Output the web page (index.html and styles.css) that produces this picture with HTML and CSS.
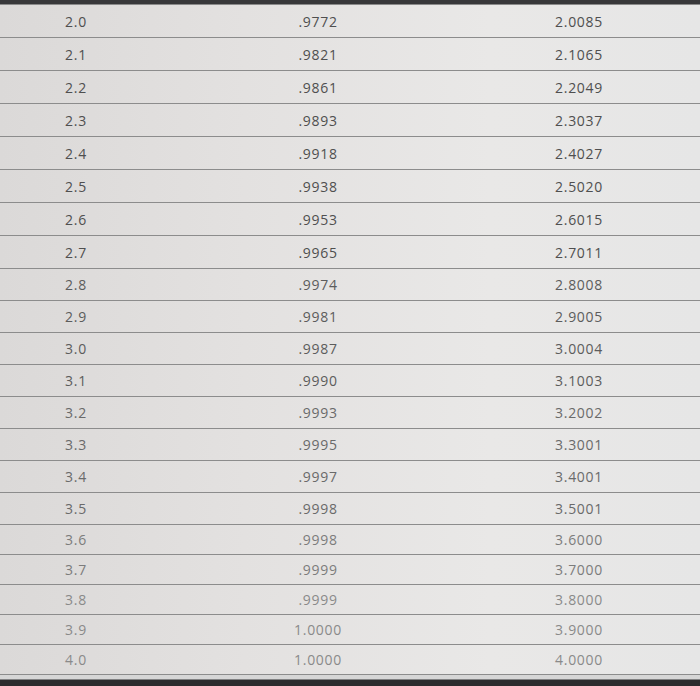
FILE: index.html
```html
<!DOCTYPE html>
<html>
<head>
<meta charset="utf-8">
<link rel="stylesheet" href="styles.css">
</head>
<body>
<div class="screen">
  <div class="bar top"></div>
  <div class="table">
    <div class="row"><span>2.0</span><span>.9772</span><span>2.0085</span></div>
    <div class="row"><span>2.1</span><span>.9821</span><span>2.1065</span></div>
    <div class="row"><span>2.2</span><span>.9861</span><span>2.2049</span></div>
    <div class="row"><span>2.3</span><span>.9893</span><span>2.3037</span></div>
    <div class="row"><span>2.4</span><span>.9918</span><span>2.4027</span></div>
    <div class="row"><span>2.5</span><span>.9938</span><span>2.5020</span></div>
    <div class="row"><span>2.6</span><span>.9953</span><span>2.6015</span></div>
    <div class="row"><span>2.7</span><span>.9965</span><span>2.7011</span></div>
    <div class="row"><span>2.8</span><span>.9974</span><span>2.8008</span></div>
    <div class="row"><span>2.9</span><span>.9981</span><span>2.9005</span></div>
    <div class="row"><span>3.0</span><span>.9987</span><span>3.0004</span></div>
    <div class="row"><span>3.1</span><span>.9990</span><span>3.1003</span></div>
    <div class="row"><span>3.2</span><span>.9993</span><span>3.2002</span></div>
    <div class="row"><span>3.3</span><span>.9995</span><span>3.3001</span></div>
    <div class="row"><span>3.4</span><span>.9997</span><span>3.4001</span></div>
    <div class="row"><span>3.5</span><span>.9998</span><span>3.5001</span></div>
    <div class="row"><span>3.6</span><span>.9998</span><span>3.6000</span></div>
    <div class="row"><span>3.7</span><span>.9999</span><span>3.7000</span></div>
    <div class="row"><span>3.8</span><span>.9999</span><span>3.8000</span></div>
    <div class="row"><span>3.9</span><span>1.0000</span><span>3.9000</span></div>
    <div class="row"><span>4.0</span><span>1.0000</span><span>4.0000</span></div>
  </div>
  <div class="bar bottom"></div>
</div>
</body>
</html>
```

FILE: styles.css
```css
html, body {
  margin: 0;
  padding: 0;
}
body {
  width: 700px;
  height: 686px;
  overflow: hidden;
  font-family: "Open Sans", "Liberation Sans", sans-serif;
}
.screen {
  display: flex;
  flex-direction: column;
  height: 686px;
  background: linear-gradient(90deg, #dbd9d8 0%, #e3e1e0 35%, #e9e8e7 70%, #e6e6e6 100%);
}
.bar.top {
  height: 4px;
  background: #38383a;
  flex: none;
}
.table {
  border-top: 1px solid #8a8a8a;
  flex: none;
}
.row {
  box-sizing: border-box;
  display: grid;
  grid-template-columns: 152px 332px 190px;
  align-items: center;
  height: 32px;
  border-bottom: 1px solid #8c8c8c;
  font-size: 14px;
  letter-spacing: 0.7px;
  color: #4f4f4f;
}
.row:nth-child(-n+8) { height: 33px; }
.row:nth-child(n+17) { height: 30px; }
.row span {
  text-align: center;
}
.row:nth-child(n+9) { color: #5c5c5c; }
.row:nth-child(n+13) { color: #6a6a6a; }
.row:nth-child(n+17) { color: #7c7c7c; }
.row:nth-child(n+19) { color: #8a8a8a; }
.bar.bottom {
  flex: 1;
  background: linear-gradient(180deg, #d6d6d6 0px, #d6d6d6 4px, #2c2c2e 5px);
}
```
